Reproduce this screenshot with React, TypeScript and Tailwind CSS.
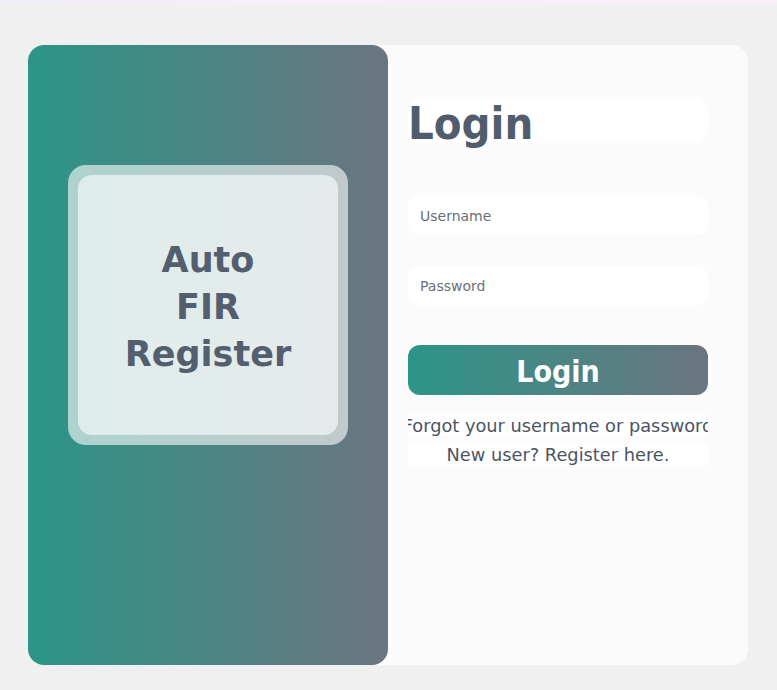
import React from "react";

const font = { fontFamily: '"DejaVu Sans", Verdana, sans-serif' };
const condensed = { fontFamily: '"DejaVu Sans Condensed", "DejaVu Sans", sans-serif' };

function BrandPanel() {
  return (
    <div className="flex w-[360px] shrink-0 items-start justify-center rounded-2xl bg-[linear-gradient(to_right,#2c9588,#6b7580)] pt-[120px]">
      <div className="rounded-[18px] bg-white/60 p-[10px]">
        <div className="flex h-[260px] w-[260px] items-center justify-center rounded-[14px] bg-white/60 pt-[4px]">
          <h2 className="text-center text-[35px] font-bold leading-[47px] text-[#535f6e]">
            Auto
            <br />
            FIR
            <br />
            Register
          </h2>
        </div>
      </div>
    </div>
  );
}

function LoginForm() {
  return (
    <div className="ml-5 flex w-[300px] flex-col pt-[52px]">
      <h1
        className="h-[46px] rounded-2xl bg-white pt-[4px] text-[45px] font-bold leading-[46px] text-[#4f5d6d]"
        style={condensed}
      >
        Login
      </h1>
      <input
        type="text"
        placeholder="Username"
        className="mt-[53px] h-[39px] rounded-[10px] bg-white px-3 text-[14px] text-[#4b5563] outline-none placeholder:text-[#6b6f75]"
        style={font}
      />
      <input
        type="password"
        placeholder="Password"
        className="mt-[31px] h-[39px] rounded-[10px] bg-white px-3 text-[14px] text-[#4b5563] outline-none placeholder:text-[#6b6f75]"
        style={font}
      />
      <button
        className="mt-[40px] h-[50px] rounded-xl bg-[linear-gradient(to_right,#2c9588,#6b7580)] pt-[3px] text-[30px] font-bold leading-[47px] text-white"
        style={condensed}
      >
        Login
      </button>
      <div className="mt-5 flex flex-col gap-2 text-[17.8px] leading-[21px] text-[#4b5563]">
        <p className="flex justify-center overflow-hidden whitespace-nowrap bg-white">
          <span>Forgot your username or password</span>
        </p>
        <p className="flex justify-center overflow-hidden whitespace-nowrap bg-white">
          <span>New user? Register here.</span>
        </p>
      </div>
    </div>
  );
}

export default function App() {
  return (
    <div className="min-h-[690px] bg-[#f0f0f0]" style={font}>
      <div className="h-[5px] bg-gradient-to-r from-[#f3eff6] to-[#f8eef6]" />
      <div className="mx-[28px] mt-[40px] flex h-[620px] w-[720px] rounded-2xl bg-[#fbfbfb]">
        <BrandPanel />
        <LoginForm />
      </div>
    </div>
  );
}
